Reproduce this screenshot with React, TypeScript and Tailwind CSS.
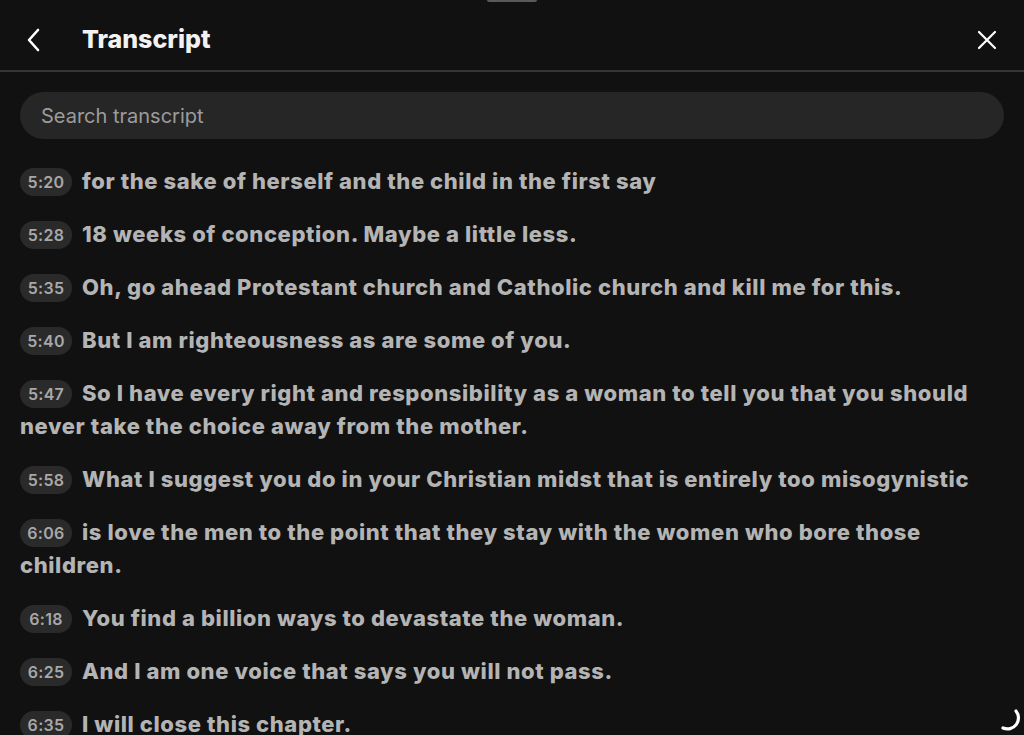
import React from 'react';

const lines: { t: string; text: string }[] = [
    { t: '5:20', text: 'for the sake of herself and the child in the first say' },
    { t: '5:28', text: '18 weeks of conception. Maybe a little less.' },
    { t: '5:35', text: 'Oh, go ahead Protestant church and Catholic church and kill me for this.' },
    { t: '5:40', text: 'But I am righteousness as are some of you.' },
    { t: '5:47', text: 'So I have every right and responsibility as a woman to tell you that you should never take the choice away from the mother.' },
    { t: '5:58', text: 'What I suggest you do in your Christian midst that is entirely too misogynistic' },
    { t: '6:06', text: 'is love the men to the point that they stay with the women who bore those children.' },
    { t: '6:18', text: 'You find a billion ways to devastate the woman.' },
    { t: '6:25', text: 'And I am one voice that says you will not pass.' },
    { t: '6:35', text: 'I will close this chapter.' },
];

export default function App() {
    return (
        <div
            className="relative w-[1024px] h-[735px] overflow-hidden bg-[#111111] text-white"
            style={{ fontFamily: 'Inter, "Noto Sans", sans-serif' }}
        >
            <div className="absolute left-[487px] top-0 w-[50px] h-[2px] rounded-b bg-[#5a5a5a]" />

            <header className="h-[72px] pt-[10px] flex items-center px-[22px] border-b-2 border-[#363636]">
                <button className="w-[24px] h-[24px] flex items-center justify-center">
                    <svg width="24" height="24" viewBox="0 0 24 24" fill="none" stroke="white" strokeWidth="2.6" strokeLinecap="round" strokeLinejoin="round">
                        <path d="M16 2 L7 12 L16 22" />
                    </svg>
                </button>
                <h1 className="ml-[36px] text-[25px] font-extrabold text-[#f2f2f2]">Transcript</h1>
                <button className="ml-auto mr-[5px] w-[20px] h-[20px] flex items-center justify-center">
                    <svg width="20" height="20" viewBox="0 0 20 20" fill="none" stroke="white" strokeWidth="2.2" strokeLinecap="round">
                        <path d="M2 2 L18 18 M18 2 L2 18" />
                    </svg>
                </button>
            </header>

            <div className="px-[20px] pt-[20px]">
                <div className="h-[47px] rounded-full bg-[#262626] flex items-center px-[21px] text-[20px] text-[#9c9c9c]">
                    Search transcript
                </div>

                <div className="mt-[26px] flex flex-col gap-[20px]">
                    {lines.map((l) => (
                        <p key={l.t} className="text-[22px] font-extrabold leading-[33px] text-[#b4b4b4] tracking-[0.6px]">
                            <span className="inline-flex items-center justify-center align-middle w-[52px] h-[28px] mr-[10px] rounded-full bg-[#2a2a2a] text-[16px] font-semibold tracking-[0.3px] text-[#a8a8a8] relative top-[-1px]">
                                {l.t}
                            </span>
                            {l.text}
                        </p>
                    ))}
                </div>
            </div>

            <svg className="absolute left-[996px] top-[706px]" width="26" height="26" viewBox="0 0 26 26" fill="none" stroke="white" strokeWidth="3.2" strokeLinecap="round">
                <path d="M20 5 A 11 11 0 0 1 7 22" />
            </svg>
        </div>
    );
}
